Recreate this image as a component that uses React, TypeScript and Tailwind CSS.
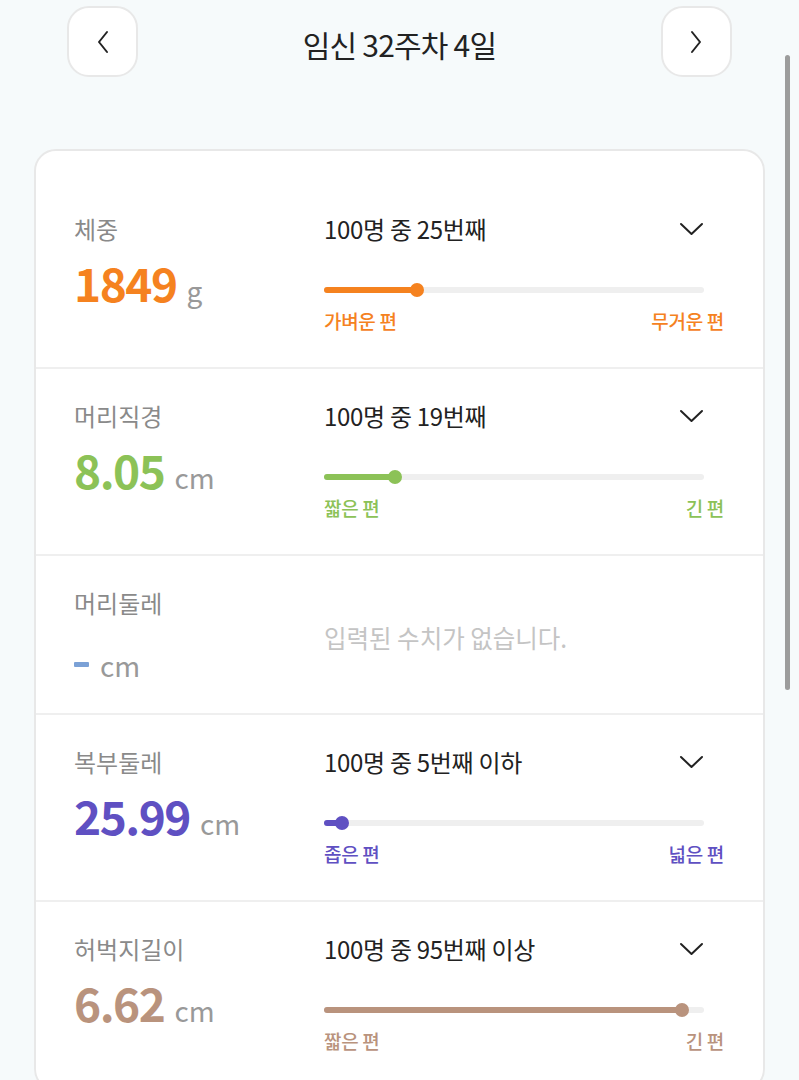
import React from 'react';

type Metric = {
  label: string;
  value: string;
  unit: string;
  color: string;
  rank?: string;
  pct?: number;
  low?: string;
  high?: string;
};

const metrics: Metric[] = [
  { label: '체중', value: '1849', unit: 'g', color: '#f5821f', rank: '100명 중 25번째', pct: 24.6, low: '가벼운 편', high: '무거운 편' },
  { label: '머리직경', value: '8.05', unit: 'cm', color: '#8cc257', rank: '100명 중 19번째', pct: 18.6, low: '짧은 편', high: '긴 편' },
  { label: '머리둘레', value: '-', unit: 'cm', color: '#7ba1d6' },
  { label: '복부둘레', value: '25.99', unit: 'cm', color: '#5f50c2', rank: '100명 중 5번째 이하', pct: 4.7, low: '좁은 편', high: '넓은 편' },
  { label: '허벅지길이', value: '6.62', unit: 'cm', color: '#b9937d', rank: '100명 중 95번째 이상', pct: 94.2, low: '짧은 편', high: '긴 편' },
];

const ChevronLeft = () => (
  <svg width="14" height="24" viewBox="0 0 14 24" fill="none">
    <path d="M11 2 L3 12 L11 22" stroke="#222" strokeWidth="2" strokeLinecap="round" strokeLinejoin="round" />
  </svg>
);

const ChevronRight = () => (
  <svg width="14" height="24" viewBox="0 0 14 24" fill="none">
    <path d="M3 2 L11 12 L3 22" stroke="#222" strokeWidth="2" strokeLinecap="round" strokeLinejoin="round" />
  </svg>
);

const ChevronDown = () => (
  <svg width="25" height="14" viewBox="0 0 25 14" fill="none">
    <path d="M2 2 L12.5 12 L23 2" stroke="#222" strokeWidth="2" strokeLinecap="round" strokeLinejoin="round" />
  </svg>
);

const Row: React.FC<{ m: Metric; last?: boolean }> = ({ m, last }) => {
  const hasData = !!m.rank;
  return (
    <div
      className={`flex pl-[38px] pr-[39px] ${hasData ? 'h-[187px]' : 'h-[159px]'} ${
        last ? '' : 'border-b-2 border-[#efefef]'
      }`}
    >
      <div className="w-[250px] shrink-0 pt-[32px]">
        <div className="text-[24px] leading-[30px] text-[#8a8a8a]">{m.label}</div>
        <div className={`${hasData ? 'mt-[8px]' : 'mt-[17px]'} flex items-baseline leading-[60px]`}>
          {m.value === '-' ? (
            <span className="mr-[1px] inline-block h-[5px] w-[15px] translate-y-[-10px] rounded-[1px]" style={{ backgroundColor: m.color }} />
          ) : (
            <span className="text-[46px] font-bold tracking-[-1.5px]" style={{ color: m.color }}>
              {m.value}
            </span>
          )}
          <span className="ml-[10px] text-[28px] text-[#999999]">{m.unit}</span>
        </div>
      </div>

      {hasData ? (
        <div className="flex-1 pt-[32px]">
          <div className="mr-[20px] flex h-[30px] items-center justify-between">
            <span className="text-[24px] leading-[30px] tracking-[-0.3px] text-[#222222]">{m.rank}</span>
            <ChevronDown />
          </div>
          <div className="relative mr-[20px] mt-[38px] h-[16px]">
            <div className="absolute left-0 right-0 top-[5px] h-[6px] rounded-full bg-[#efefef]" />
            <div
              className="absolute left-0 top-[5px] h-[6px] rounded-full"
              style={{ width: `${m.pct}%`, backgroundColor: m.color }}
            />
            <div
              className="absolute top-[1px] h-[14px] w-[14px] -translate-x-1/2 rounded-full"
              style={{ left: `${m.pct}%`, backgroundColor: m.color }}
            />
          </div>
          <div className="mt-[12px] flex justify-between text-[19px] font-medium leading-[22px] tracking-[-0.3px]" style={{ color: m.color }}>
            <span>{m.low}</span>
            <span>{m.high}</span>
          </div>
        </div>
      ) : (
        <div className="flex-1 pt-[67px]">
          <div className="text-[24.5px] leading-[30px] text-[#c4c4c4]">입력된 수치가 없습니다.</div>
        </div>
      )}
    </div>
  );
};

const App: React.FC = () => {
  return (
    <div
      className="relative h-[1080px] overflow-hidden bg-[#f6fafb]"
      style={{ fontFamily: '"Noto Sans CJK KR", "Noto Sans", sans-serif' }}
    >
      <div className="flex items-center justify-between px-[67px] pt-[6px]">
        <button className="flex h-[71px] w-[71px] items-center justify-center rounded-[22px] border-2 border-[#e8e8e8] bg-white">
          <ChevronLeft />
        </button>
        <div className="translate-y-[2px] text-[30px] leading-[36px] tracking-[-0.8px] text-[#222222]">임신 32주차 4일</div>
        <button className="flex h-[71px] w-[71px] items-center justify-center rounded-[22px] border-2 border-[#e8e8e8] bg-white">
          <ChevronRight />
        </button>
      </div>

      <div className="mx-[34px] mt-[72px] rounded-[22px] border-2 border-[#e8e8e8] bg-white pt-[31px]">
        {metrics.map((m, i) => (
          <Row key={m.label} m={m} last={i === metrics.length - 1} />
        ))}
      </div>

      {/* overlay scrollbar */}
      <div className="absolute left-[785px] top-[55px] h-[635px] w-[5px] rounded-full bg-[#9c9c9c]" />
    </div>
  );
};

export default App;
